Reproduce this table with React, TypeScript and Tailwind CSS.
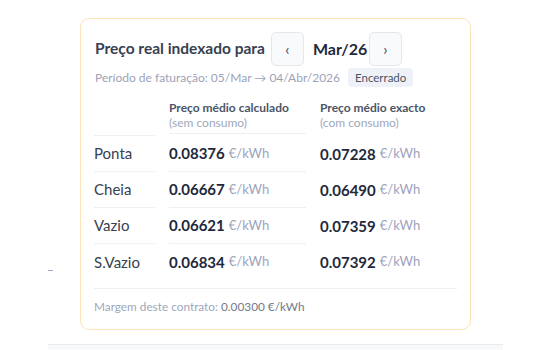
import React from "react";

const rows = [
  { label: "Ponta", calc: "0.08376", exact: "0.07228" },
  { label: "Cheia", calc: "0.06667", exact: "0.06490" },
  { label: "Vazio", calc: "0.06621", exact: "0.07359" },
  { label: "S.Vazio", calc: "0.06834", exact: "0.07392" },
];

export default function App() {
  return (
    <div className="w-[550px] h-[350px] bg-white relative" style={{ fontFamily: "Lato, 'Noto Sans', sans-serif" }}>
      <div className="absolute left-[48px] top-[270px] w-[5px] h-px bg-[#a0a8c0]" />
      <div className="pt-[18px] pl-[80px]">
        <div className="w-[391px] h-[312px] border border-[#fde3b8] rounded-[9px] px-[13px] pt-[13px]">
          <div className="flex items-center h-[34px]">
            <span className="text-[15.5px] font-bold text-[#374151] ml-px">Preço real indexado para</span>
            <button className="ml-[6px] w-[33px] h-[34px] rounded-[5px] border border-[#e5e7eb] bg-[#f8fafc] flex items-center justify-center text-[#334155] text-[15px]">‹</button>
            <span className="ml-[9px] w-[48px] text-[16px] font-bold text-[#1e293b]">Mar/26</span>
            <button className="ml-[8px] w-[33px] h-[34px] rounded-[5px] border border-[#e5e7eb] bg-[#f8fafc] flex items-center justify-center text-[#334155] text-[15px]">›</button>
          </div>
          <div className="flex items-center mt-[2px] h-[19px]">
            <span className="text-[12px] text-[#9ca3b8] ml-px">Período de faturação: 05/Mar → 04/Abr/2026</span>
            <span className="ml-[8px] px-[7px] h-[19px] flex items-center rounded-[4px] bg-[#eef2f8] text-[11.5px] text-[#4b5563]">Encerrado</span>
          </div>
          <div className="grid grid-cols-[61px_137px_1fr] gap-x-[14px] mt-[13px]">
            <div className="border-b border-[#eef0f3] h-[36px]" />
            <div className="border-b border-[#eef0f3] h-[34px] leading-[15px]">
              <div className="text-[12px] font-bold text-[#4b5567]">Preço médio calculado</div>
              <div className="text-[12px] text-[#a0a8bc]">(sem consumo)</div>
            </div>
            <div className="leading-[15px]">
              <div className="text-[12px] font-bold text-[#4b5567]">Preço médio exacto</div>
              <div className="text-[12px] text-[#a0a8bc]">(com consumo)</div>
            </div>
            {rows.map((r, i) => (
              <React.Fragment key={r.label}>
                <div className={`h-[36px] flex items-center text-[15px] text-[#374151] ${i < 3 ? "border-b border-[#eef0f3]" : ""}`}>{r.label}</div>
                <div className={`h-[36px] flex items-center ${i < 3 ? "border-b border-[#eef0f3]" : ""}`}>
                  <span className="text-[15px] font-bold text-[#1e293b]">{r.calc}</span>
                  <span className="ml-[4px] text-[13px] text-[#9ca3bc]">€/kWh</span>
                </div>
                <div className="h-[36px] flex items-center">
                  <span className="text-[15px] font-bold text-[#1e293b]">{r.exact}</span>
                  <span className="ml-[4px] text-[13px] text-[#9ca3bc]">€/kWh</span>
                </div>
              </React.Fragment>
            ))}
          </div>
          <div className="mt-[8px] border-t border-[#eef0f3] pt-[9px] text-[11.8px] text-[#a0a8bc]">
            Margem deste contrato: <span className="text-[#737a8a]">0.00300 €/kWh</span>
          </div>
        </div>
      </div>
      <div className="absolute left-[48px] top-[344px] w-[455px] h-[6px] bg-[#f8f9fb] border-t border-[#e8eaee]" />
    </div>
  );
}
